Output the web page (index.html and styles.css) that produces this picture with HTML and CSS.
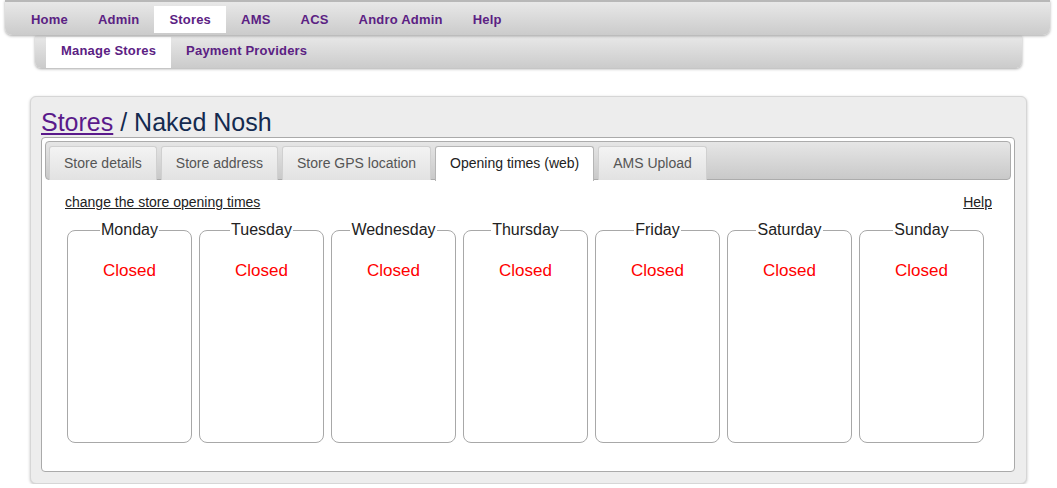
FILE: index.html
```html
<!DOCTYPE html>
<html>
<head>
<meta charset="utf-8">
<link rel="stylesheet" href="styles.css">
</head>
<body>
<nav class="topnav">
  <a class="nav-item">Home</a>
  <a class="nav-item">Admin</a>
  <a class="nav-item active">Stores</a>
  <a class="nav-item">AMS</a>
  <a class="nav-item">ACS</a>
  <a class="nav-item">Andro Admin</a>
  <a class="nav-item">Help</a>
</nav>
<nav class="subnav">
  <a class="sub-item active">Manage Stores</a>
  <a class="sub-item">Payment Providers</a>
</nav>
<main class="panel">
  <h1 class="title"><a class="title-link" href="#">Stores</a> / Naked Nosh</h1>
  <div class="tabbox">
    <div class="tabbar">
      <span class="tab">Store details</span>
      <span class="tab">Store address</span>
      <span class="tab">Store GPS location</span>
      <span class="tab active">Opening times (web)</span>
      <span class="tab">AMS Upload</span>
    </div>
    <div class="content">
      <div class="links">
        <a class="link" href="#">change the store opening times</a>
        <a class="link" href="#">Help</a>
      </div>
      <div class="days">
        <fieldset class="day"><legend>Monday</legend><div class="day-body">Closed</div></fieldset>
        <fieldset class="day"><legend>Tuesday</legend><div class="day-body">Closed</div></fieldset>
        <fieldset class="day"><legend>Wednesday</legend><div class="day-body">Closed</div></fieldset>
        <fieldset class="day"><legend>Thursday</legend><div class="day-body">Closed</div></fieldset>
        <fieldset class="day"><legend>Friday</legend><div class="day-body">Closed</div></fieldset>
        <fieldset class="day"><legend>Saturday</legend><div class="day-body">Closed</div></fieldset>
        <fieldset class="day"><legend>Sunday</legend><div class="day-body">Closed</div></fieldset>
      </div>
    </div>
  </div>
</main>
</body>
</html>
```
FILE: styles.css
```css
html, body {
  margin: 0;
  padding: 0;
  background: #fff;
  font-family: "Liberation Sans", Arial, sans-serif;
}

.topnav {
  display: flex;
  margin: 0 0 0 5px;
  width: 1045px;
  height: 35px;
  box-sizing: border-box;
  padding: 5px 0 2px 11px;
  background: linear-gradient(#e8e8e8, #cbcbcb);
  border-top: 2px solid #b8b8b8;
  border-radius: 0 0 7px 7px;
  box-shadow: 0 1px 3px rgba(0,0,0,0.35);
  position: relative;
  z-index: 2;
}

.nav-item, .sub-item {
  display: block;
  padding: 0 15px;
  line-height: 28px;
  font-size: 13px;
  font-weight: bold;
  letter-spacing: 0.2px;
  color: #5b2183;
  text-decoration: none;
}

.topnav .nav-item {
  margin-top: -1px;
}

.nav-item.active, .sub-item.active {
  background: #fff;
}

.subnav {
  display: flex;
  margin: 1px 0 0 35px;
  width: 987px;
  height: 32px;
  box-sizing: border-box;
  padding: 1px 0 0 11px;
  background: linear-gradient(#e8e8e8, #cbcbcb);
  border-radius: 0 0 6px 6px;
  box-shadow: 0 1px 3px rgba(0,0,0,0.35);
  position: relative;
  z-index: 1;
}

.panel {
  display: block;
  margin: 28px 0 0 30px;
  width: 997px;
  box-sizing: border-box;
  padding: 11px 11px 11px 10px;
  background: #ededed;
  border: 1px solid #d6d6d6;
  border-radius: 6px;
  box-shadow: 0 1px 3px rgba(0,0,0,0.25);
}

.title {
  margin: 0 0 1px;
  font-size: 25px;
  line-height: 28px;
  font-weight: normal;
  color: #142a4f;
}

.title-link {
  color: #5a1a8b;
  text-decoration: underline;
}

.tabbox {
  background: #fff;
  border: 1px solid #aaa;
  border-radius: 4px;
  padding: 3px;
}

.tabbar {
  display: flex;
  gap: 4px;
  height: 39px;
  box-sizing: border-box;
  padding: 4px 3px 0;
  background: linear-gradient(#e6e6e6, #c9c9c9);
  border: 1px solid #acacac;
  border-radius: 4px;
}

.tab {
  display: block;
  padding: 0 14px;
  height: 34px;
  line-height: 33px;
  font-size: 14px;
  color: #555;
  background: linear-gradient(#f3f3f3, #e2e2e2);
  border: 1px solid #d0d0d0;
  border-bottom: none;
  border-radius: 3px 3px 0 0;
  box-sizing: border-box;
}

.tab.active {
  background: #fff;
  color: #222;
  border-color: #b5b5b5;
  height: 35px;
}

.content {
  padding: 0 19px 25px 20px;
}

.links {
  display: flex;
  justify-content: space-between;
  margin-top: 14px;
  line-height: 16px;
}

.link {
  font-size: 14px;
  color: #222;
  text-decoration: underline;
}

.days {
  display: flex;
  gap: 7px;
  margin: 11px 0 0 2px;
}

.day {
  width: 125px;
  box-sizing: border-box;
  margin: 0;
  padding: 0;
  min-width: 0;
  border: 1px solid #a8a8a8;
  border-radius: 8px;
}

.day legend {
  margin: 0 auto;
  padding: 0 1px;
  font-size: 16px;
  line-height: 18px;
  color: #222;
}

.day-body {
  height: 203px;
  box-sizing: border-box;
  padding-top: 22px;
  text-align: center;
  font-size: 17px;
  line-height: 20px;
  color: #f00;
}
```
